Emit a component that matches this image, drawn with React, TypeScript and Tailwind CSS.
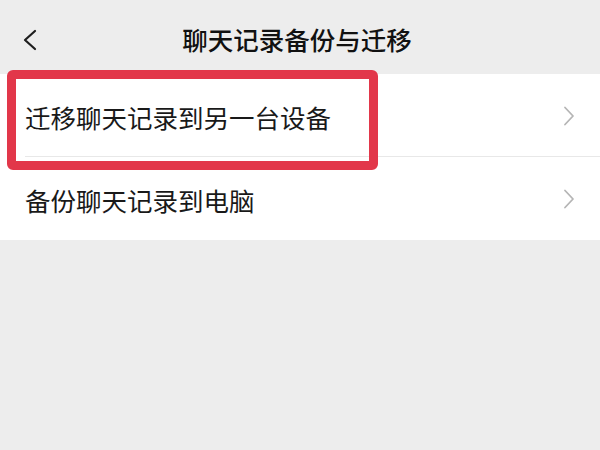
const font = { fontFamily: '"Noto Sans CJK SC", "Noto Sans", sans-serif' };

function Chevron() {
  return (
    <svg width="12" height="20" viewBox="0 0 12 20" className="mr-[25px]">
      <path d="M2 1.5 L10 10 L2 18.5" fill="none" stroke="#b5b5b5" strokeWidth="1.8" strokeLinecap="round" strokeLinejoin="round" />
    </svg>
  );
}

function Row({ label, divider }: { label: string; divider?: boolean }) {
  return (
    <div className="relative flex h-[83px] items-center justify-between bg-white">
      <span className="pl-[25px] pt-[2px] text-[25.5px] leading-none text-[#191919]">{label}</span>
      <Chevron />
      {divider && <div className="absolute bottom-0 left-[25px] right-0 h-px bg-[#e8e8e8]" />}
    </div>
  );
}

export default function App() {
  return (
    <div className="relative h-[450px] w-[600px] overflow-hidden bg-[#ededed]" style={font}>
      {/* ── Header ── */}
      <div className="relative flex h-[74px] items-center justify-center pr-[6px]">
        <svg width="16" height="22" viewBox="0 0 16 22" className="absolute left-[22px] top-[29px]">
          <path d="M13 2 L3 11 L13 20" fill="none" stroke="#1e1e1e" strokeWidth="2.2" strokeLinecap="round" strokeLinejoin="round" />
        </svg>
        <span className="pt-[4px] text-[25.5px] font-medium leading-none text-[#111]">聊天记录备份与迁移</span>
      </div>

      {/* ── List ── */}
      <div>
        <Row label="迁移聊天记录到另一台设备" divider />
        <Row label="备份聊天记录到电脑" />
      </div>

      {/* red annotation box */}
      <div className="absolute left-[7px] top-[70px] h-[100px] w-[371px] rounded-[6px] border-[9px] border-[#e2374a]" />
    </div>
  );
}
